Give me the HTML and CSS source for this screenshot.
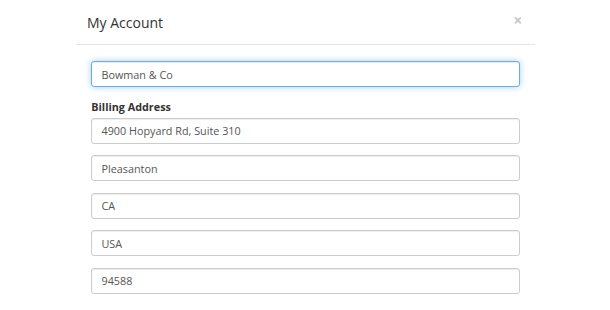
FILE: index.html
```html
<!DOCTYPE html>
<html>
<head>
<meta charset="utf-8">
<link rel="stylesheet" href="styles.css">
</head>
<body>
<div class="modal">
  <div class="modal-header">
    <h4 class="modal-title">My Account</h4>
    <button class="close" type="button">×</button>
  </div>
  <div class="modal-body">
    <div class="form-group">
      <input class="form-control focus" type="text" value="Bowman &amp; Co">
    </div>
    <div class="form-group">
      <label class="label">Billing Address</label>
      <input class="form-control" type="text" value="4900 Hopyard Rd, Suite 310">
    </div>
    <div class="form-group">
      <input class="form-control" type="text" value="Pleasanton">
    </div>
    <div class="form-group">
      <input class="form-control" type="text" value="CA">
    </div>
    <div class="form-group">
      <input class="form-control" type="text" value="USA">
    </div>
    <div class="form-group">
      <input class="form-control" type="text" value="94588">
    </div>
  </div>
</div>
</body>
</html>
```
FILE: styles.css
```css
html, body {
  margin: 0;
  padding: 0;
  background: #fff;
}
body {
  font-family: "Open Sans", "DejaVu Sans", sans-serif;
  color: #333;
  font-size: 10.8px;
}
.modal {
  width: 459px;
  margin: 0 0 0 76px;
  background: #fff;
}
.modal-header {
  display: flex;
  align-items: flex-start;
  justify-content: space-between;
  padding: 12.5px 11.5px 11.5px 11px;
  border-bottom: 1px solid #e5e5e5;
  height: 20px;
}
.modal-title {
  margin: 0;
  font-size: 14px;
  font-weight: 400;
  line-height: 20px;
  color: #333;
}
.close {
  border: 0;
  background: transparent;
  padding: 0;
  margin-right: 1px;
  font-family: "Open Sans", "DejaVu Sans", sans-serif;
  font-size: 16px;
  font-weight: 700;
  line-height: 14px;
  color: #000;
  opacity: 0.22;
}
.modal-body {
  padding: 16.3px 15.3px 15.3px 15.3px;
}
.form-group {
  margin-bottom: 11.5px;
}
.label {
  display: block;
  font-weight: 700;
  line-height: 15.3px;
  margin-bottom: 3.8px;
  color: #333;
}
.form-control {
  display: block;
  box-sizing: border-box;
  width: 100%;
  height: 26px;
  margin: 0;
  padding: 0 9.2px;
  font-family: "Open Sans", "DejaVu Sans", sans-serif;
  font-size: 10.8px;
  color: #555;
  background: #fff;
  border: 1px solid #ccc;
  border-radius: 3px;
  box-shadow: inset 0 1px 1px rgba(0,0,0,0.075);
  outline: none;
}
.form-control.focus {
  border-color: #66afe9;
  box-shadow: inset 0 1px 1px rgba(0,0,0,0.075), 0 0 6px rgba(102,175,233,0.6);
}
```
